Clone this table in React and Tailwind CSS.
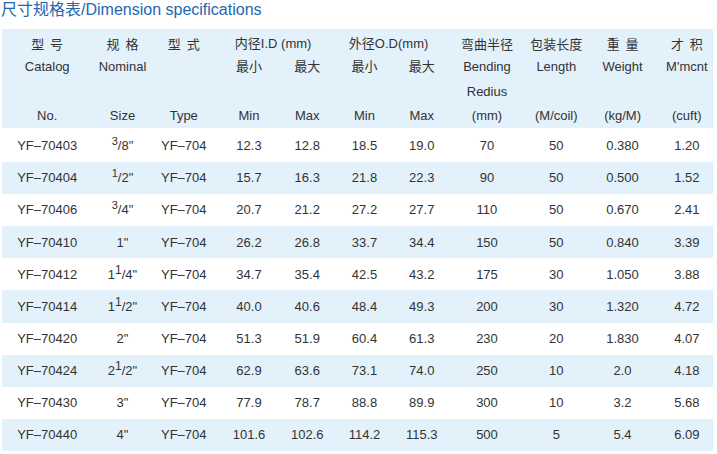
const rows = [
  ['YF–70403', { sup: '3', rest: '/8"' }, '12.3', '12.8', '18.5', '19.0', '70', '50', '0.380', '1.20'],
  ['YF–70404', { sup: '1', rest: '/2"' }, '15.7', '16.3', '21.8', '22.3', '90', '50', '0.500', '1.52'],
  ['YF–70406', { sup: '3', rest: '/4"' }, '20.7', '21.2', '27.2', '27.7', '110', '50', '0.670', '2.41'],
  ['YF–70410', { text: '1"' }, '26.2', '26.8', '33.7', '34.4', '150', '50', '0.840', '3.39'],
  ['YF–70412', { whole: '1', sup: '1', rest: '/4"' }, '34.7', '35.4', '42.5', '43.2', '175', '30', '1.050', '3.88'],
  ['YF–70414', { whole: '1', sup: '1', rest: '/2"' }, '40.0', '40.6', '48.4', '49.3', '200', '30', '1.320', '4.72'],
  ['YF–70420', { text: '2"' }, '51.3', '51.9', '60.4', '61.3', '230', '20', '1.830', '4.07'],
  ['YF–70424', { whole: '2', sup: '1', rest: '/2"' }, '62.9', '63.6', '73.1', '74.0', '250', '10', '2.0', '4.18'],
  ['YF–70430', { text: '3"' }, '77.9', '78.7', '88.8', '89.9', '300', '10', '3.2', '5.68'],
  ['YF–70440', { text: '4"' }, '101.6', '102.6', '114.2', '115.3', '500', '5', '5.4', '6.09']
]

const widths = [90, 60, 62, 68, 48, 66, 48, 82, 56, 76, 52]

const cjk = { fontFamily: '"Noto Sans CJK SC", sans-serif' }

function Size({ s }) {
  if (s.text) return <span>{s.text}</span>
  return (
    <span>
      {s.whole}
      <span className={s.whole ? 'relative -top-[5px] text-[12px]' : 'relative -top-[5px] text-[11px]'}>{s.sup}</span>
      {s.rest}
    </span>
  )
}

export default function App() {
  return (
    <div
      className="w-[717px] h-[454px] bg-white text-[#333] overflow-hidden"
      style={{ fontFamily: '"Liberation Sans", Arial, "Noto Sans CJK SC", sans-serif' }}
    >
      <h1 className="text-[16px] leading-[20px] text-[#2466b0] pl-[1px] pt-0">
        尺寸规格表/Dimension specifications
      </h1>

      <table className="table-fixed border-collapse ml-[2px] mt-[9px] w-[711px] text-[13px] text-center">
        <colgroup>
          {widths.map((w, i) => (
            <col key={i} style={{ width: w }} />
          ))}
        </colgroup>
        <thead className="bg-[#e3f1fb]">
          <tr className="h-[26px] align-bottom">
            <th className="font-normal pb-[2px]" style={cjk}>型&nbsp;&nbsp;号</th>
            <th className="font-normal pb-[2px]" style={cjk}>规&nbsp;&nbsp;格</th>
            <th className="font-normal pb-[2px]" style={cjk}>型&nbsp;&nbsp;式</th>
            <th colSpan={2} className="font-normal pb-[2px]">内径I.D (mm)</th>
            <th colSpan={2} className="font-normal pb-[2px]">外径O.D(mm)</th>
            <th className="font-normal pb-[2px]" style={cjk}>弯曲半径</th>
            <th className="font-normal pb-[2px]" style={cjk}>包装长度</th>
            <th className="font-normal pb-[2px]" style={cjk}>重&nbsp;&nbsp;量</th>
            <th className="font-normal pb-[2px]" style={cjk}>才&nbsp;&nbsp;积</th>
          </tr>
          <tr className="h-[24px]">
            <th className="font-normal">Catalog</th>
            <th className="font-normal">Nominal</th>
            <th className="font-normal"></th>
            <th className="font-normal">最小</th>
            <th className="font-normal">最大</th>
            <th className="font-normal">最小</th>
            <th className="font-normal">最大</th>
            <th className="font-normal">Bending</th>
            <th className="font-normal">Length</th>
            <th className="font-normal">Weight</th>
            <th className="font-normal">M'mcnt</th>
          </tr>
          <tr className="h-[25px]">
            <th colSpan={7}></th>
            <th className="font-normal">Redius</th>
            <th colSpan={3}></th>
          </tr>
          <tr className="h-[24px]">
            <th className="font-normal">No.</th>
            <th className="font-normal">Size</th>
            <th className="font-normal">Type</th>
            <th className="font-normal">Min</th>
            <th className="font-normal">Max</th>
            <th className="font-normal">Min</th>
            <th className="font-normal">Max</th>
            <th className="font-normal">(mm)</th>
            <th className="font-normal">(M/coil)</th>
            <th className="font-normal">(kg/M)</th>
            <th className="font-normal">(cuft)</th>
          </tr>
        </thead>
        <tbody>
          <tr className="h-[2px]">
            <td colSpan={11} className="p-0"></td>
          </tr>
          {rows.map((r, i) => (
            <tr key={r[0]} className={i % 2 === 1 ? 'h-[32.1px] bg-[#e3f1fb]' : 'h-[32.1px] bg-white'}>
              <td>{r[0]}</td>
              <td>
                <Size s={r[1]} />
              </td>
              <td>YF–704</td>
              {r.slice(2).map((v, j) => (
                <td key={j}>{v}</td>
              ))}
            </tr>
          ))}
        </tbody>
      </table>
    </div>
  )
}
